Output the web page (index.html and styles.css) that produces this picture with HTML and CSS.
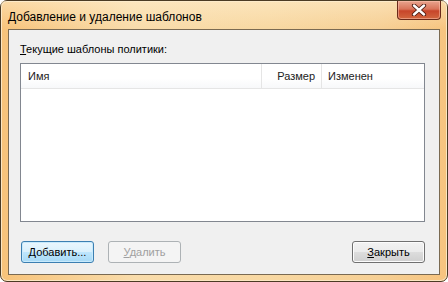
FILE: index.html
```html
<!DOCTYPE html>
<html lang="ru">
<head>
    <meta charset="UTF-8">
    <title>Добавление и удаление шаблонов</title>
    <link rel="stylesheet" href="styles.css">
</head>
<body>
    <div class="window">
        <div class="titlebar">
            <span class="title">Добавление и удаление шаблонов</span>
            <div class="close-btn">
                <svg width="16" height="12" viewBox="0 0 16 12">
                    <path d="M3 1.5 L13 10.5 M13 1.5 L3 10.5" stroke="#4a1a10" stroke-width="4.2" stroke-linecap="round"/>
                    <path d="M3 1.5 L13 10.5 M13 1.5 L3 10.5" stroke="#ffffff" stroke-width="2.4" stroke-linecap="round"/>
                </svg>
            </div>
        </div>

        <div class="client">
            <div class="label"><u>Т</u>екущие шаблоны политики:</div>

            <div class="listview">
                <div class="list-header">
                    <div class="col col-name">Имя</div>
                    <div class="col col-size">Размер</div>
                    <div class="col col-date">Изменен</div>
                </div>
                <div class="list-body"></div>
            </div>

            <div class="buttons">
                <button class="btn btn-default">Добавить...</button>
                <button class="btn btn-disabled"><u>У</u>далить</button>
                <span class="spacer"></span>
                <button class="btn"><u>З</u>акрыть</button>
            </div>
        </div>
    </div>
</body>
</html>
```

FILE: styles.css
```css
body {
    margin: 0;
    font-family: "Liberation Sans", Arial, sans-serif;
    font-size: 11px;
    background: #ffffff;
}

.window {
    width: 448px;
    height: 282px;
    box-sizing: border-box;
    border: 1px solid #4b3b24;
    border-radius: 7px;
    background: linear-gradient(90deg, #f7c37a 0%, #f9dcab 30%, #f8d8a2 60%, #f6cf94 85%, #f7c47f 100%);
    box-shadow: inset 0 0 0 1px #fbe6c2;
    display: flex;
    flex-direction: column;
}

.titlebar {
    height: 28px;
    display: flex;
    align-items: flex-start;
    justify-content: space-between;
    background: linear-gradient(180deg, rgba(255, 240, 210, 0.5) 0%, rgba(255, 255, 255, 0) 100%);
}

.title {
    margin: 8px 0 0 7px;
    color: #000000;
    font-size: 12px;
    line-height: 16px;
}

.close-btn {
    width: 44px;
    height: 19px;
    margin-right: 6px;
    box-sizing: border-box;
    border: 1px solid #6a2a1a;
    border-top: none;
    border-radius: 0 0 4px 4px;
    background: linear-gradient(180deg, #e9a48e 0%, #d9745a 45%, #c7452a 55%, #d2673f 100%);
    box-shadow: inset 0 0 0 1px rgba(255, 200, 180, 0.5);
    display: flex;
    align-items: center;
    justify-content: center;
}

.client {
    flex: 1;
    margin: 0 7px 6px 7px;
    border: 1px solid #7a6a52;
    background: #f0f0f0;
    padding: 11px 14px 0 11px;
    display: flex;
    flex-direction: column;
}

.label {
    line-height: 16px;
    color: #000000;
}

.listview {
    margin-top: 6px;
    height: 159px;
    box-sizing: border-box;
    border: 1px solid #828790;
    background: #ffffff;
    display: flex;
    flex-direction: column;
}

.list-header {
    height: 24px;
    display: flex;
    border-bottom: 1px solid #e5e5e5;
    background: linear-gradient(180deg, #ffffff 0%, #ffffff 60%, #f7f8fa 100%);
}

.col {
    line-height: 25px;
    color: #222222;
    border-right: 1px solid #e5e5e5;
    box-sizing: border-box;
}

.col-name {
    width: 241px;
    padding-left: 7px;
}

.col-size {
    width: 60px;
    text-align: right;
    padding-right: 6px;
}

.col-date {
    width: 62px;
    padding-left: 6px;
    border-right: none;
}

.list-body {
    flex: 1;
}

.buttons {
    display: flex;
    gap: 14px;
    margin-top: 19px;
    padding-left: 1px;
    padding-right: 0;
}

.spacer {
    flex: 1;
}

.btn {
    width: 73px;
    height: 22px;
    padding: 0;
    font-family: inherit;
    font-size: 11px;
    color: #000000;
    border: 1px solid #707070;
    border-radius: 3px;
    background: linear-gradient(180deg, #f2f2f2 0%, #ebebeb 50%, #dddddd 51%, #cfcfcf 100%);
    box-shadow: inset 0 0 0 1px #fcfcfc;
}

.btn-default {
    border-color: #3c7fb1;
    background: linear-gradient(180deg, #eaf6fd 0%, #d9f0fc 50%, #bee6fd 51%, #a7d9f5 100%);
    box-shadow: inset 0 0 0 1px #c8eafc;
}

.btn-disabled {
    color: #a0a0a0;
    border-color: #adb2b5;
    background: #f4f4f4;
    box-shadow: none;
}
```
